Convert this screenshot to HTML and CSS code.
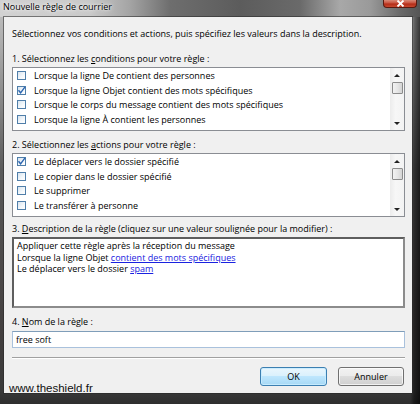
FILE: index.html
```html
<!DOCTYPE html>
<html lang="fr">
<head>
<meta charset="utf-8">
<title>Nouvelle règle de courrier</title>
<link rel="stylesheet" href="styles.css">
</head>
<body>
<div class="window">
  <div class="titlebar">
    <span class="title">Nouvelle règle de courrier</span>
    <span class="close"><svg width="9" height="7" viewBox="0 0 9 7"><path d="M1.5 0.5 L7.5 6.5 M7.5 0.5 L1.5 6.5" stroke="#fff" stroke-width="1.8" fill="none"/></svg></span>
  </div>
  <div class="client">
    <p class="intro">Sélectionnez vos conditions et actions, puis spécifiez les valeurs dans la description.</p>

    <div class="label">1. Sélectionnez les <u>c</u>onditions pour votre règle :</div>
    <div class="listbox">
      <ul class="items">
        <li><span class="cb"></span>Lorsque la ligne De contient des personnes</li>
        <li><span class="cb checked"><svg viewBox="0 0 9 9" width="9" height="9"><path d="M1.5 4.2 L3.6 6.8 L8 0.8" stroke="#2c66b0" stroke-width="1.4" fill="none"/></svg></span>Lorsque la ligne Objet contient des mots spécifiques</li>
        <li><span class="cb"></span>Lorsque le corps du message contient des mots spécifiques</li>
        <li><span class="cb"></span>Lorsque la ligne À contient les personnes</li>
      </ul>
      <div class="scroll">
        <span class="arrow"><span class="tri-up"></span></span>
        <span class="thumb"></span>
        <span class="track"></span>
        <span class="arrow"><span class="tri-down"></span></span>
      </div>
    </div>

    <div class="label gap2">2. Sélectionnez les <u>a</u>ctions pour votre règle :</div>
    <div class="listbox">
      <ul class="items">
        <li><span class="cb checked"><svg viewBox="0 0 9 9" width="9" height="9"><path d="M1.5 4.2 L3.6 6.8 L8 0.8" stroke="#2c66b0" stroke-width="1.4" fill="none"/></svg></span>Le déplacer vers le dossier spécifié</li>
        <li><span class="cb"></span>Le copier dans le dossier spécifié</li>
        <li><span class="cb"></span>Le supprimer</li>
        <li><span class="cb"></span>Le transférer à personne</li>
      </ul>
      <div class="scroll">
        <span class="arrow"><span class="tri-up"></span></span>
        <span class="thumb"></span>
        <span class="track"></span>
        <span class="arrow"><span class="tri-down"></span></span>
      </div>
    </div>

    <div class="label gap3">3. <u>D</u>escription de la règle (cliquez sur une valeur soulignée pour la modifier) :</div>
    <div class="desc">
      <div>Appliquer cette règle après la réception du message</div>
      <div>Lorsque la ligne Objet <a href="#">contient des mots spécifiques</a></div>
      <div>Le déplacer vers le dossier <a href="#">spam</a></div>
    </div>

    <div class="label gap2">4. <u>N</u>om de la règle :</div>
    <div class="input">free soft</div>

    <div class="separator"></div>

    <div class="buttons">
      <span class="btn default">OK</span>
      <span class="btn">Annuler</span>
    </div>
  </div>
  <div class="watermark">www.theshield.fr</div>
</div>
</body>
</html>
```

FILE: styles.css
```css
* { box-sizing: border-box; }
html, body { margin: 0; padding: 0; }
body {
  width: 420px;
  height: 404px;
  overflow: hidden;
  background: #222;
  font-family: "Open Sans", "Noto Sans", sans-serif;
  font-size: 9px;
  color: #000;
}
.window {
  position: relative;
  width: 420px;
  height: 404px;
  display: flex;
  flex-direction: column;
  background:
    linear-gradient(90deg, rgba(0,0,0,0) 0, rgba(0,0,0,0) 410px, rgba(0,0,0,0.45) 414px, rgba(0,0,0,0.7) 420px),
    linear-gradient(180deg, #c4c4c4 0, #a9a9a9 50px, #5a5a5a 170px, #433f3f 330px, #3a3a3a 390px, #2e2e2e 404px);
}
.titlebar {
  height: 17px;
  flex: none;
  display: flex;
  align-items: flex-start;
  justify-content: space-between;
  background: linear-gradient(90deg, #d2d2d2 0, #c9c9c9 90px, #a4a4a4 130px, #6e6e6e 170px, #5c5c5c 240px, #6a6a6a 300px, #a8a8a8 340px, #9a9a9a 370px, #6a6a6a 400px, #555 420px);
}
.title {
  padding-left: 3px;
  line-height: 13px;
  text-shadow: 0 0 5px rgba(255,255,255,0.95), 0 0 2px rgba(255,255,255,0.9);
}
.close {
  width: 34px;
  height: 8px;
  margin-right: 3px;
  display: flex;
  align-items: center;
  justify-content: center;
  border: 1px solid #5a1a10;
  border-top: none;
  border-radius: 0 0 4px 4px;
  background: linear-gradient(180deg, #d88a78 0, #c9503c 45%, #b32c18 55%, #c8482e 100%);
}
.close svg { display: block; }
.client {
  flex: none;
  height: 376px;
  margin: 0 8px 0 4px;
  padding: 10px 7px 0 8px;
  background: #f0f0f0;
  box-shadow: 0 0 0 1px rgba(40,40,40,0.55);
  display: flex;
  flex-direction: column;
}
.intro {
  margin: 0;
  line-height: 14px;
  white-space: nowrap;
}
.label {
  margin-top: 11px;
  line-height: 14px;
  white-space: nowrap;
}
.label.gap2 { margin-top: 7px; }
.label.gap3 { margin-top: 5px; }
.label + .listbox, .label + .desc { margin-top: 1px; }
.listbox {
  height: 64px;
  border: 1px solid #8a8d93;
  background: #fff;
  display: flex;
}
.items {
  flex: 1;
  list-style: none;
  margin: 0;
  padding: 0;
  overflow: hidden;
}
.items li {
  height: 14.7px;
  display: flex;
  align-items: center;
  padding-left: 4px;
  white-space: nowrap;
}
.cb {
  flex: none;
  width: 9px;
  height: 9px;
  margin-right: 8px;
  border: 1px solid #4f7ea9;
  background: linear-gradient(135deg, #d6e3ef 0, #f4f8fb 60%, #fff 100%);
  display: flex;
  align-items: center;
  justify-content: center;
}
.cb svg { display: block; flex: none; }
.scroll {
  flex: none;
  width: 14px;
  background: linear-gradient(90deg, #ececec 0, #f7f7f7 40%, #f3f3f3 100%);
  display: flex;
  flex-direction: column;
  align-items: center;
}
.arrow {
  height: 14px;
  width: 100%;
  display: flex;
  align-items: center;
  justify-content: center;
}
.tri-up {
  width: 0; height: 0;
  border-left: 3px solid transparent;
  border-right: 3px solid transparent;
  border-bottom: 3px solid #222;
}
.tri-down {
  width: 0; height: 0;
  border-left: 3px solid transparent;
  border-right: 3px solid transparent;
  border-top: 3px solid #222;
}
.thumb {
  width: 11px;
  height: 12px;
  border: 1px solid #8c8c8c;
  border-radius: 1px;
  background: linear-gradient(90deg, #f2f2f2 0, #e6e6e6 50%, #d4d4d4 100%);
}
.track { flex: 1; }
.desc {
  height: 71px;
  border: 2px solid;
  border-color: #5e5e5e #8c8c8c #8c8c8c #5e5e5e;
  background: #fff;
  padding: 1px 3px;
  line-height: 11.5px;
  white-space: nowrap;
}
.desc a { color: #1a22e0; text-decoration: underline; }
.input {
  margin-top: 2px;
  height: 17px;
  border: 1px solid #a9c1dc;
  border-top-color: #7f9db9;
  background: #fff;
  padding-left: 3px;
  line-height: 15px;
}
.separator {
  margin-top: 9px;
  height: 2px;
  border-top: 1px solid #a0a0a0;
  border-bottom: 1px solid #fff;
}
.buttons {
  margin-top: 8px;
  display: flex;
  justify-content: flex-end;
  gap: 11px;
  padding-right: 1px;
}
.btn {
  width: 66px;
  height: 19px;
  display: flex;
  align-items: center;
  justify-content: center;
  border: 1px solid #707070;
  border-radius: 3px;
  background: linear-gradient(180deg, #f2f2f2 0, #ebebeb 50%, #dddddd 50%, #cfcfcf 100%);
  box-shadow: inset 0 0 0 1px rgba(255,255,255,0.7);
}
.btn.default {
  width: 67px;
  border-color: #3c7fb1;
  background: linear-gradient(180deg, #eaf6fd 0, #d9f0fc 50%, #bee6fd 50%, #a7d9f5 100%);
  box-shadow: inset 0 0 0 1px rgba(200,236,255,0.9);
}
.watermark {
  position: absolute;
  left: 9px;
  top: 381px;
  font-family: "Liberation Sans", Arial, sans-serif;
  font-size: 11.5px;
  line-height: 14px;
  color: #111;
}
```
